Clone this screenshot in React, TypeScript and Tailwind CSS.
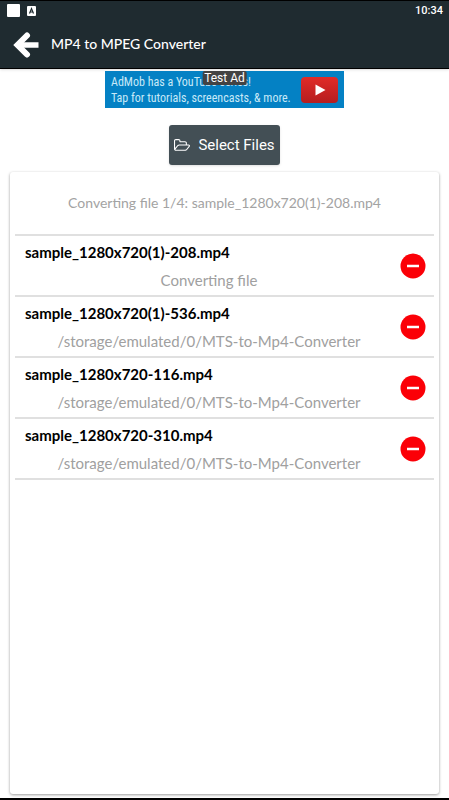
import React from 'react';

const OUTPUT_FOLDER = '/storage/emulated/0/MTS-to-Mp4-Converter';

const files = [
    { name: 'sample_1280x720(1)-208.mp4', status: 'Converting file' },
    { name: 'sample_1280x720(1)-536.mp4', status: OUTPUT_FOLDER },
    { name: 'sample_1280x720-116.mp4', status: OUTPUT_FOLDER },
    { name: 'sample_1280x720-310.mp4', status: OUTPUT_FOLDER }
];

const BackIcon = () => (
    <svg viewBox="0 0 26 28" className="w-[26px] h-7" fill="none" stroke="#fff" aria-hidden="true">
        <path d="M14 5.500 4.500 15l9.500 9.500" strokeWidth="6" strokeLinecap="round" strokeLinejoin="miter" />
        <path d="M5 15h20.500" strokeWidth="5.500" />
    </svg>
);

const FolderIcon = () => (
    <svg viewBox="0 0 1909 1536" className="w-4 h-[13px]" fill="currentColor" aria-hidden="true">
        <path transform="translate(0 -128)" d="M1781 931q0-35-53-35h-1088q-40 0-85.500 21.500t-71.500 52.500l-294 363q-18 24-18 40 0 35 53 35h1088q40 0 86-22t71-53l294-363q18-22 18-39zM640 768h768v-160q0-40-28-68t-68-28h-576q-40 0-68-28t-28-68v-64q0-40-28-68t-68-28h-320q-40 0-68 28t-28 68v853l256-315q44-53 116-87.500t140-34.500zm1269 163q0 62-46 120l-295 363q-43 53-116 87.500t-140 34.500h-1088q-92 0-158-66t-66-158v-960q0-92 66-158t158-66h320q92 0 158 66t66 158v32h544q92 0 158 66t66 158v160h192q54 0 99 24.500t67 70.500q15 32 15 68z" />
    </svg>
);

const StatusBar = () => (
    <div className="flex items-center h-5 pl-[7px] pr-[6px] border-t border-black font-[Roboto,sans-serif]">
        <span className="w-[13px] h-[13px] rounded-[1px] bg-white"></span>
        <svg viewBox="0 0 9 10" className="w-[9px] h-[10px] ml-[7px]" aria-hidden="true">
            <rect width="9" height="10" rx="1" fill="#fff" />
            <path d="M2.500 7.500 4.500 2.500l2 5M3.300 6h2.400" fill="none" stroke="#1f2b30" strokeWidth="1.200" />
        </svg>
        <time className="ml-auto text-[11px] leading-5 font-medium text-white">10:34</time>
    </div>
);

const AdBanner = () => (
    <a href="#" className="relative flex items-center w-[239px] h-[37px] px-[6px] bg-[#0481c4] text-[#c8e9f8]">
        <span className="text-[12px] leading-4 whitespace-nowrap font-['Roboto_Condensed',Roboto,sans-serif]">
            AdMob has a YouTube series!<br />
            Tap for tutorials, screencasts, &amp; more.
        </span>
        <svg viewBox="0 0 37 26" className="w-[37px] h-[26px] ml-auto shrink-0" aria-hidden="true">
            <defs>
                <linearGradient id="play" x1="0" y1="0" x2="0" y2="1">
                    <stop offset="0" stopColor="#e12b28" />
                    <stop offset="1" stopColor="#b51d1f" />
                </linearGradient>
            </defs>
            <rect width="37" height="26" rx="4" fill="url(#play)" />
            <path d="M14.500 7.500v11l10-5.500z" fill="#fff" />
        </svg>
        <span className="absolute top-0 left-1/2 -translate-x-1/2 h-[14px] px-[2px] rounded-[2px] bg-[#434343] text-[12px] leading-[14px] text-white whitespace-nowrap font-[Roboto,sans-serif]">
            Test Ad
        </span>
    </a>
);

export default function App() {
    return (
        <div className="flex flex-col min-h-screen bg-white border-b-2 border-black font-[Lato,sans-serif]">
            <header className="bg-[#1f2b30] border-b border-black shadow-sm">
                <StatusBar />
                <div className="flex items-center h-12 pl-[13px] gap-3">
                    <button type="button" aria-label="Back">
                        <BackIcon />
                    </button>
                    <h1 className="text-[14px] leading-5 font-medium text-white">MP4 to MPEG Converter</h1>
                </div>
            </header>

            <main className="flex flex-col flex-1 items-center pt-[2px] px-[10px] pb-1">
                <AdBanner />

                <button
                    type="button"
                    className="flex items-center justify-center gap-2 w-[111px] h-10 mt-[17px] rounded-[3px] bg-[#434f55] text-[15px] text-white shadow-sm whitespace-nowrap font-[Roboto,sans-serif]"
                >
                    <FolderIcon />
                    Select Files
                </button>

                <section className="flex-1 w-full mt-[7px] px-[5px] rounded-[3px] bg-white shadow-[0_1px_3px_rgba(0,0,0,0.4)]">
                    <p className="h-[62px] leading-[62px] text-[14px] text-center text-[#a3a3a3] whitespace-nowrap">
                        Converting file 1/4: sample_1280x720(1)-208.mp4
                    </p>
                    <ul className="border-t-2 border-[#e0e0e0]">
                        {files.map((file) => (
                            <li key={file.name} className="flex items-center h-[61px] pl-[10px] pr-2 border-b-2 border-[#e0e0e0]">
                                <div className="flex-1 min-w-0">
                                    <h2 className="text-[15px] leading-7 font-bold text-black">{file.name}</h2>
                                    <p className="text-[15px] leading-7 text-center text-[#a0a0a0]">{file.status}</p>
                                </div>
                                <button type="button" aria-label={`Remove ${file.name}`} className="ml-[7px] shrink-0">
                                    <svg viewBox="0 0 26 26" className="w-[26px] h-[26px]" aria-hidden="true">
                                        <circle cx="13" cy="13" r="12.500" fill="#fb0007" />
                                        <path d="M7 13h12" stroke="#fff" strokeWidth="2.500" />
                                    </svg>
                                </button>
                            </li>
                        ))}
                    </ul>
                </section>
            </main>
        </div>
    );
}
